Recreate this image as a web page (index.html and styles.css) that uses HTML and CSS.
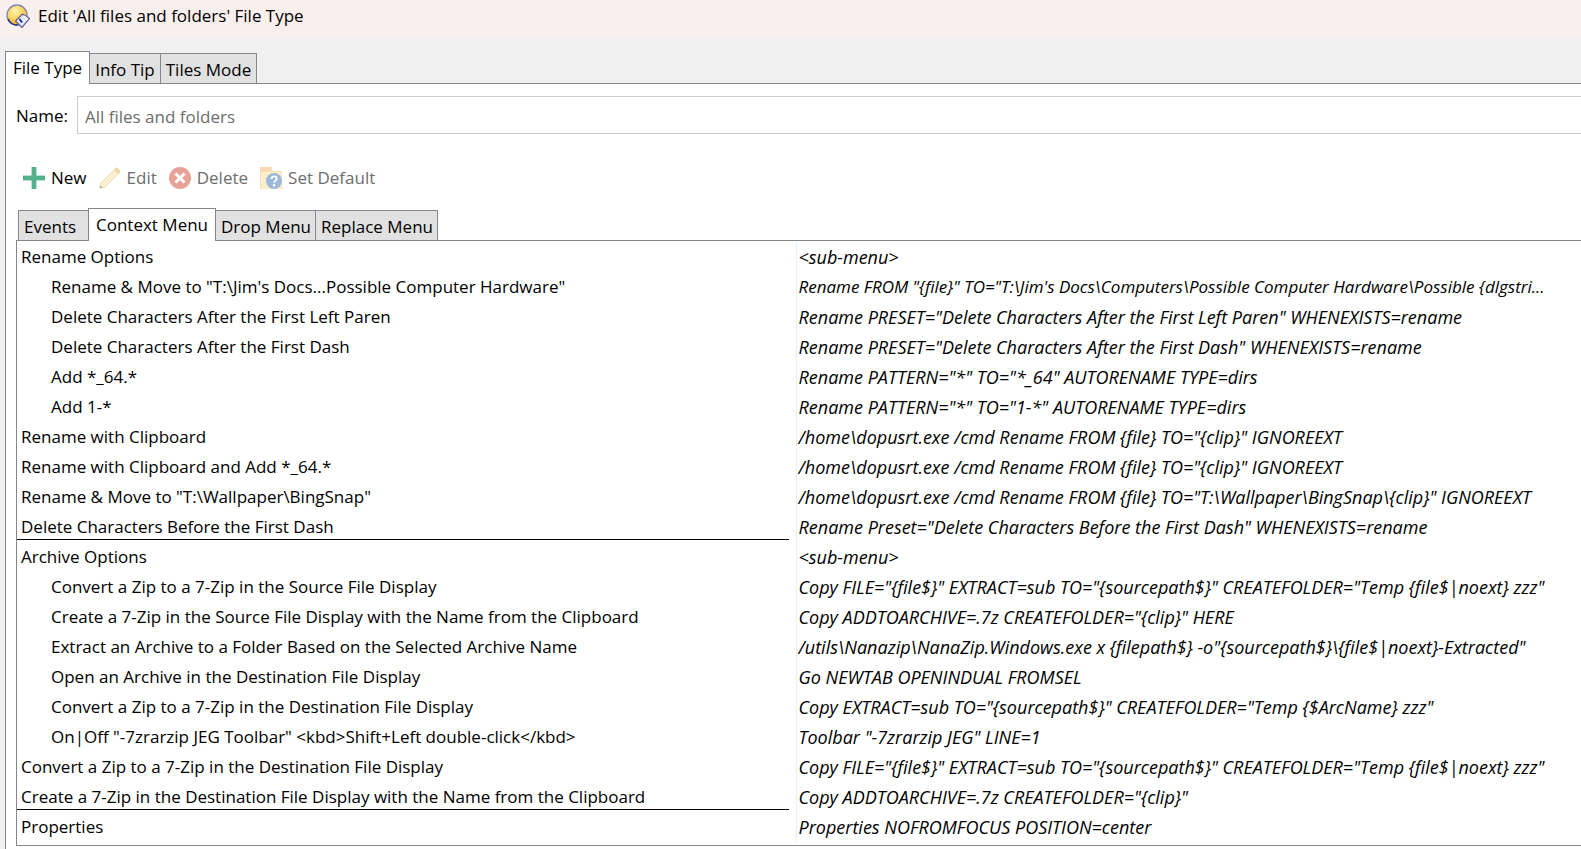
FILE: index.html
```html
<!DOCTYPE html>
<html lang="en">
<head>
    <meta charset="UTF-8">
    <meta name="viewport" content="width=device-width, initial-scale=1.0">
    <title>Edit 'All files and folders' File Type</title>
    <link rel="stylesheet" href="styles.css">
</head>
<body>

<header class="titlebar">
    <svg class="app-icon" viewBox="0 0 24 24" aria-hidden="true">
        <defs>
            <radialGradient id="ball" cx="0.4" cy="0.3" r="0.7">
                <stop offset="0" stop-color="#fff3b0"/>
                <stop offset="0.6" stop-color="#fbd258"/>
                <stop offset="1" stop-color="#e9ae2c"/>
            </radialGradient>
        </defs>
        <circle cx="11" cy="11" r="10" fill="url(#ball)" stroke="#8388b4" stroke-width="1.4"/>
        <path d="M2 15a10 10 0 0 0 10 6" fill="none" stroke="#2c3184" stroke-width="1.6"/>
        <path d="M9.500 17l7-7 7 4.500-7.500 9z" fill="#e4e8f5" stroke="#5c6092" stroke-width="1.200"/>
        <path d="M17.500 12.500l4 3" stroke="#fff" stroke-width="2.500"/>
        <path d="M13.500 15l2.500 3.500" stroke="#2528a8" stroke-width="2"/>
    </svg>
    <h1 class="title">Edit 'All files and folders' File Type</h1>
</header>

<main class="dialog">
    <div class="tabs" role="tablist">
        <button class="tab active" role="tab" aria-selected="true">File Type</button>
        <button class="tab" role="tab" aria-selected="false">Info Tip</button>
        <button class="tab" role="tab" aria-selected="false">Tiles Mode</button>
    </div>

    <section class="panel">
        <div class="name-row">
            <label for="type-name">Name:</label>
            <input id="type-name" type="text" value="All files and folders" readonly>
        </div>

        <!-- Only New is available until a row is selected -->
        <div class="toolbar">
            <button class="tool">
                <svg viewBox="0 0 22 22"><path d="M9 0h4v9h9v4h-9v9H9v-9H0V9h9z" fill="#54b18b" stroke="#54b18b" stroke-width=".8"/></svg>
                New
            </button>
            <button class="tool" disabled>
                <svg viewBox="0 0 22 22">
                    <path d="M1 21l1-5L15.500 2.500 19.500 6.500 6 20z" fill="#fdf0cf" stroke="#ead8b0"/>
                    <path d="M15.500 2.500l1.200-1.200q.8-.8 1.600 0l2.400 2.400q.8.800 0 1.600L19.500 6.500z" fill="#f1d9ae" stroke="#e6cfa0"/>
                    <path d="M.8 21.200l.6-2.400 1.800 1.800z" fill="#a9a08c"/>
                </svg>
                Edit
            </button>
            <button class="tool" disabled>
                <svg viewBox="0 0 22 22">
                    <circle cx="11" cy="11" r="11" fill="#e7a297"/>
                    <path d="M6.500 6.500l9 9m0-9l-9 9" stroke="#fff" stroke-width="3"/>
                </svg>
                Delete
            </button>
            <button class="tool" disabled>
                <svg viewBox="0 0 22 22">
                    <path d="M0 0h12v4H0z" fill="#f5d9b4"/>
                    <path d="M0 4h22v18H0z" fill="#fdeecb"/>
                    <path d="M.5 22V4.500h21V22" fill="none" stroke="#f7deb6"/>
                    <circle cx="14" cy="14" r="8" fill="#9cb9dc"/>
                    <path d="M11.500 12q0-2.600 2.600-2.600t2.600 2.300q0 1.200-1.300 2.100-1.300.8-1.300 2" fill="none" stroke="#fff" stroke-width="1.800"/>
                    <circle cx="14.100" cy="18.200" r="1.200" fill="#fff"/>
                </svg>
                Set Default
            </button>
        </div>

        <div class="tabs inner-tabs" role="tablist">
            <button class="tab" role="tab" aria-selected="false">Events</button>
            <button class="tab active" role="tab" aria-selected="true">Context Menu</button>
            <button class="tab" role="tab" aria-selected="false">Drop Menu</button>
            <button class="tab" role="tab" aria-selected="false">Replace Menu</button>
        </div>

        <div class="list">
            <table class="commands">
                <colgroup>
                    <col class="col-name">
                    <col>
                </colgroup>
                <tbody>
                    <tr><td>Rename Options</td><td>&lt;sub-menu&gt;</td></tr>
                    <tr class="child long"><td>Rename &amp; Move to "T:\Jim's Docs...Possible Computer Hardware"</td><td>Rename FROM "{file}" TO="T:\Jim's Docs\Computers\Possible Computer Hardware\Possible {dlgstri...</td></tr>
                    <tr class="child"><td>Delete Characters After the First Left Paren</td><td>Rename PRESET="Delete Characters After the First Left Paren" WHENEXISTS=rename</td></tr>
                    <tr class="child"><td>Delete Characters After the First Dash</td><td>Rename PRESET="Delete Characters After the First Dash" WHENEXISTS=rename</td></tr>
                    <tr class="child"><td>Add *_64.*</td><td>Rename PATTERN="*" TO="*_64" AUTORENAME TYPE=dirs</td></tr>
                    <tr class="child"><td>Add 1-*</td><td>Rename PATTERN="*" TO="1-*" AUTORENAME TYPE=dirs</td></tr>
                    <tr><td>Rename with Clipboard</td><td>/home\dopusrt.exe /cmd Rename FROM {file} TO="{clip}" IGNOREEXT</td></tr>
                    <tr><td>Rename with Clipboard and Add *_64.*</td><td>/home\dopusrt.exe /cmd Rename FROM {file} TO="{clip}" IGNOREEXT</td></tr>
                    <tr><td>Rename &amp; Move to "T:\Wallpaper\BingSnap"</td><td>/home\dopusrt.exe /cmd Rename FROM {file} TO="T:\Wallpaper\BingSnap\{clip}" IGNOREEXT</td></tr>
                    <tr class="group-end"><td>Delete Characters Before the First Dash</td><td>Rename Preset="Delete Characters Before the First Dash" WHENEXISTS=rename</td></tr>
                    <tr><td>Archive Options</td><td>&lt;sub-menu&gt;</td></tr>
                    <tr class="child"><td>Convert a Zip to a 7-Zip in the Source File Display</td><td>Copy FILE="{file$}" EXTRACT=sub TO="{sourcepath$}" CREATEFOLDER="Temp {file$|noext} zzz"</td></tr>
                    <tr class="child"><td>Create a 7-Zip in the Source File Display with the Name from the Clipboard</td><td>Copy ADDTOARCHIVE=.7z CREATEFOLDER="{clip}" HERE</td></tr>
                    <tr class="child"><td>Extract an Archive to a Folder Based on the Selected Archive Name</td><td>/utils\Nanazip\NanaZip.Windows.exe x {filepath$} -o"{sourcepath$}\{file$|noext}-Extracted"</td></tr>
                    <tr class="child"><td>Open an Archive in the Destination File Display</td><td>Go NEWTAB OPENINDUAL FROMSEL</td></tr>
                    <tr class="child"><td>Convert a Zip to a 7-Zip in the Destination File Display</td><td>Copy EXTRACT=sub TO="{sourcepath$}" CREATEFOLDER="Temp {$ArcName} zzz"</td></tr>
                    <tr class="child"><td>On|Off "-7zrarzip JEG Toolbar" &lt;kbd&gt;Shift+Left double-click&lt;/kbd&gt;</td><td>Toolbar "-7zrarzip JEG" LINE=1</td></tr>
                    <tr><td>Convert a Zip to a 7-Zip in the Destination File Display</td><td>Copy FILE="{file$}" EXTRACT=sub TO="{sourcepath$}" CREATEFOLDER="Temp {file$|noext} zzz"</td></tr>
                    <tr class="group-end"><td>Create a 7-Zip in the Destination File Display with the Name from the Clipboard</td><td>Copy ADDTOARCHIVE=.7z CREATEFOLDER="{clip}"</td></tr>
                    <tr><td>Properties</td><td>Properties NOFROMFOCUS POSITION=center</td></tr>
                </tbody>
            </table>
        </div>
    </section>
</main>

</body>
</html>
```

FILE: styles.css
```css
* {
    box-sizing: border-box;
}
body {
    margin: 0;
    background-color: #f0f0f0;
    color: #000;
    font-family: "Open Sans", "Noto Sans", sans-serif;
    font-size: 17px;
    line-height: 24px;
    overflow: hidden;
}
button, input {
    font: inherit;
    color: inherit;
}

/* Title bar */
.titlebar {
    display: flex;
    align-items: center;
    gap: 8px;
    height: 38px;
    padding: 0 6px 7px;
    background-color: #f9f0ee;
}
.app-icon {
    width: 24px;
    height: 24px;
}
.title {
    margin: 0;
    font-size: 17px;
    font-weight: normal;
}

.dialog {
    padding: 13px 0 0 5px;
}

/* Tabs, the active one covers the line of the panel below */
.tabs {
    display: flex;
    align-items: flex-end;
}
.tab {
    height: 30px;
    padding: 2px 5px 0;
    border: 1px solid #828790;
    border-bottom: none;
    border-left: none;
    background-color: #e1e1e1;
    text-align: left;
    white-space: nowrap;
}
.tab:first-child {
    border-left: 1px solid #828790;
}
.tab.active {
    position: relative;
    height: 33px;
    margin-bottom: -1px;
    padding: 0 7px;
    border-left: 1px solid #828790;
    background-color: #fff;
}
.tab + .tab.active {
    margin-left: -1px;
}
.panel {
    padding: 12px 0 3px 10px;
    border: 1px solid #828790;
    border-right: none;
    border-bottom: none;
    background-color: #fff;
}

.name-row {
    display: flex;
    align-items: center;
    gap: 9px;
}
.name-row label {
    padding-top: 2px;
}
.name-row input {
    flex: 1;
    min-width: 0;
    height: 38px;
    padding: 2px 7px 0;
    border: 1px solid #ccc;
    border-right: none;
    background-color: #fff;
    color: #6d6d6d;
    outline: none;
}

/* Toolbar */
.toolbar {
    display: flex;
    gap: 12px;
    padding: 32px 0 18px 7px;
}
.tool {
    display: flex;
    align-items: center;
    gap: 6px;
    padding: 0;
    border: none;
    background: none;
}
.tool:disabled {
    color: #6d6d6d;
}
.tool svg {
    width: 22px;
    height: 22px;
}
.inner-tabs {
    padding-left: 2px;
}
.inner-tabs .tab {
    min-width: 71px;
    padding-right: 4px;
}
.inner-tabs .tab.active {
    padding-right: 7px;
}

/* Command list */
.list {
    padding: 1px 0 3px;
    border: 1px solid #828790;
    border-right: none;
}
.commands {
    width: 100%;
    table-layout: fixed;
    border-collapse: collapse;
}
.col-name {
    width: 779px;
}
.commands td {
    height: 30px;
    padding: 0 0 0 4px;
    overflow: hidden;
    white-space: nowrap;
}
.commands td:last-child {
    padding-left: 2px;
    border-left: 1px solid #e5f0fb;
    font-size: 18px;
    font-style: italic;
}
/* Keeps the longest command inside the column */
.commands .long td:last-child {
    font-size: 17px;
}
.commands .child td:first-child {
    padding-left: 34px;
}
.commands .group-end td:first-child {
    background: linear-gradient(#000, #000) 0 27px / calc(100% - 7px) 1px no-repeat;
}
```
